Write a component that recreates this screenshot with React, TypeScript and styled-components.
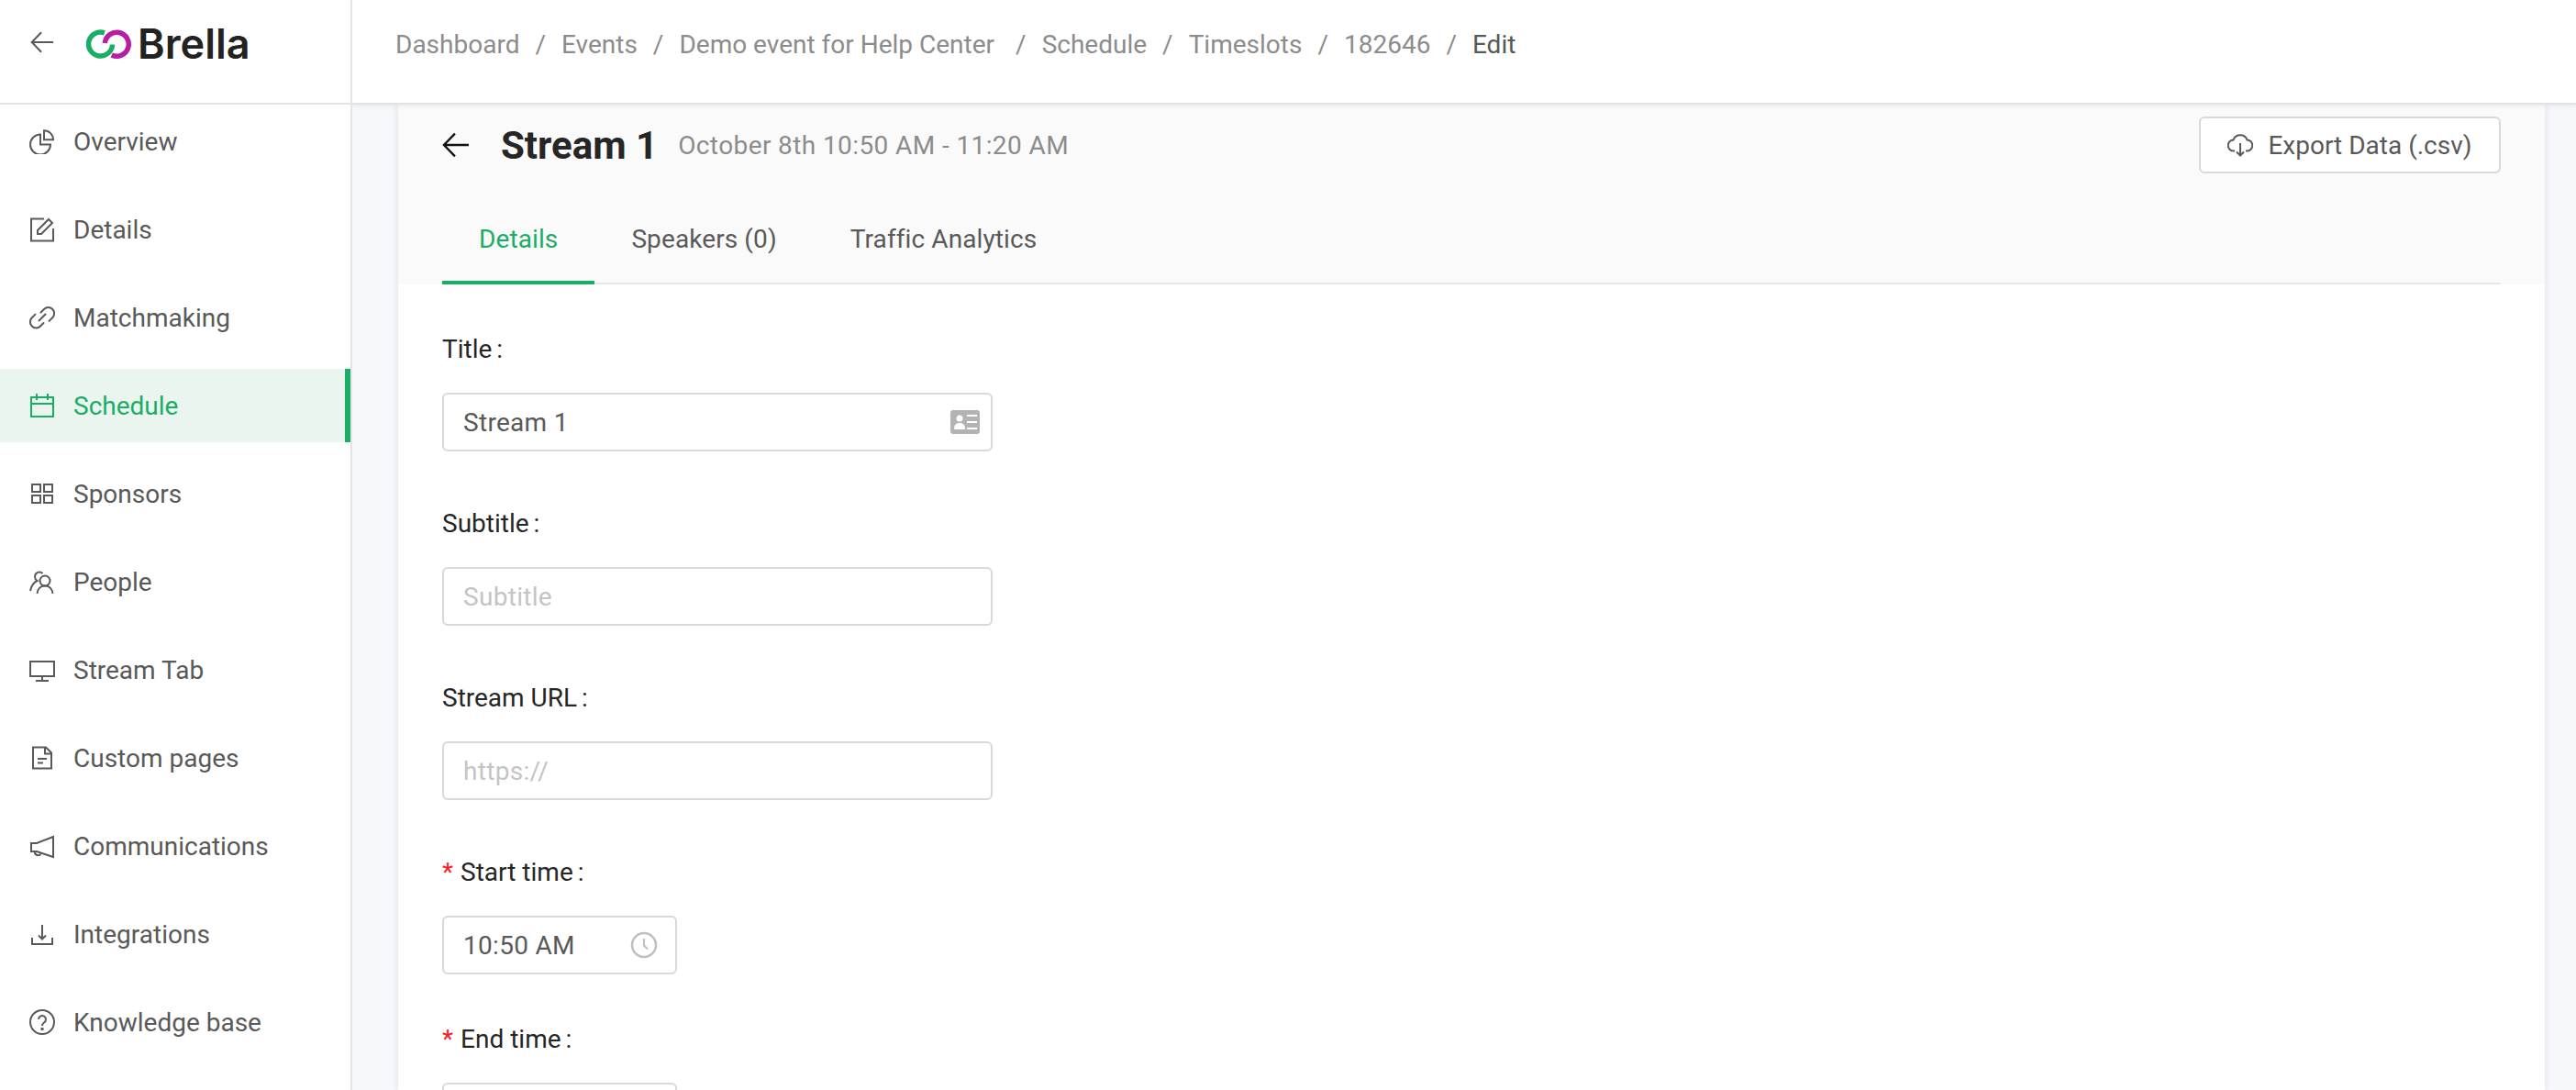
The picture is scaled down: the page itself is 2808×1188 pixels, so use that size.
import React from "react";
import styled, { createGlobalStyle } from "styled-components";

const FONT = `Roboto, "Noto Sans", "Liberation Sans", sans-serif`;

const GlobalStyle = createGlobalStyle`
  html, body {
    margin: 0;
    height: 100%;
    overflow: hidden;
    background: #f7f8fc;
    font-family: ${FONT};
  }
  * { box-sizing: border-box; }
`;

const Page = styled.div`
  display: grid;
  grid-template-columns: 384px 1fr;
  width: 2808px;
  height: 1188px;
  overflow: hidden;
`;

const Sidebar = styled.aside`
  background: #fff;
  border-right: 2px solid #e4e4e6;
  height: 1188px;
  overflow: hidden;
`;

const Brand = styled.div`
  height: 114px;
  border-bottom: 2px solid #e2e2e2;
  display: flex;
  align-items: flex-start;
  padding: 31px 0 0 33px;
`;

const BackLink = styled.span`
  display: flex;
  width: 61px;
  height: 30px;
  margin-top: 2px;
  color: #595959;
`;

const BrandName = styled.span`
  font-family: Inter, sans-serif;
  font-weight: 600;
  font-size: 45px;
  line-height: 34px;
  color: #222;
  margin-left: 7px;
`;

const Nav = styled.nav`
  display: flex;
  flex-direction: column;
  gap: 16px;
`;

const NavItem = styled.a<{ $active?: boolean }>`
  display: flex;
  align-items: center;
  gap: 20px;
  height: 80px;
  padding-left: 32px;
  font-size: 28px;
  color: ${(p) => (p.$active ? "#1aad66" : "#595959")};
  background: ${(p) => (p.$active ? "#ebf5ef" : "transparent")};
  border-right: 6px solid ${(p) => (p.$active ? "#1aad66" : "transparent")};
`;

const Main = styled.main`
  min-width: 0;
  height: 1188px;
  overflow: hidden;
`;

const TopBar = styled.header`
  height: 114px;
  background: #fff;
  border-bottom: 2px solid #e2e2e2;
  box-shadow: 0 2px 6px rgba(0, 0, 0, 0.06);
  display: flex;
  align-items: flex-start;
  padding: 31px 0 0 47px;
  position: relative;
  z-index: 2;
`;

const Crumbs = styled.ol`
  display: flex;
  list-style: none;
  margin: 0;
  padding: 0;
  font-size: 28px;
  line-height: 36px;
  color: #8c8c8c;
`;

const Crumb = styled.li<{ $current?: boolean; $wide?: boolean }>`
  color: ${(p) => (p.$current ? "#595959" : "#8c8c8c")};
  &:not(:last-child)::after {
    content: "/";
    margin: 0 ${(p) => (p.$wide ? "17px 0 23px" : "17px")};
    color: #8c8c8c;
  }
`;

const Content = styled.div`
  padding: 0 34px 0 50px;
`;

const Card = styled.section`
  background: #fff;
  box-shadow: 0 0 8px rgba(40, 50, 90, 0.12);
  height: 1074px;
  overflow: hidden;
`;

const CardHead = styled.div`
  background: #fafafa;
  padding: 13px 48px 0;
  height: 196px;
`;

const TitleRow = styled.div`
  display: flex;
  align-items: center;
  height: 62px;
`;

const BackArrow = styled.span`
  display: flex;
  color: #111;
  margin-right: 34px;
`;

const Heading = styled.h1`
  margin: 0 22px 0 0;
  font-size: 42px;
  font-weight: 700;
  color: #262626;
`;

const When = styled.span`
  font-size: 28px;
  letter-spacing: 0.4px;
  color: #8c8c8c;
`;

const ExportButton = styled.button`
  margin-left: auto;
  width: 329px;
  height: 62px;
  display: flex;
  align-items: center;
  justify-content: center;
  gap: 16px;
  background: #fff;
  border: 2px solid #d9d9d9;
  border-radius: 6px;
  font-family: inherit;
  font-size: 28px;
  color: #595959;
`;

const Tabs = styled.div`
  display: flex;
  margin-top: 32px;
  height: 89px;
  border-bottom: 2px solid #e8e8e8;
`;

const Tab = styled.div<{ $active?: boolean }>`
  display: flex;
  align-items: center;
  height: 89px;
  padding: 0 40px 7px;
  font-size: 28px;
  letter-spacing: 0.1px;
  color: ${(p) => (p.$active ? "#1aad66" : "#595959")};
  border-bottom: 4px solid ${(p) => (p.$active ? "#1aad66" : "transparent")};
`;

const Form = styled.form`
  padding: 51px 48px 0;
`;

const Field = styled.div<{ $gap?: number }>`
  margin-bottom: ${(p) => p.$gap ?? 59}px;
`;

const Label = styled.label`
  display: block;
  height: 40px;
  line-height: 40px;
  margin-bottom: 27px;
  font-size: 28px;
  color: #262626;
  &::after {
    content: ":";
    margin-left: 5px;
  }
`;

const Star = styled.span`
  color: #f5222d;
  margin-right: 8px;
`;

const InputBox = styled.div<{ $narrow?: boolean }>`
  display: flex;
  align-items: center;
  width: ${(p) => (p.$narrow ? 256 : 600)}px;
  height: 64px;
  border: 2px solid #d9d9d9;
  border-radius: 6px;
  background: #fff;
  padding: 0 12px 0 21px;
`;

const Input = styled.input`
  flex: 1;
  min-width: 0;
  border: 0;
  outline: 0;
  padding: 0;
  font-family: inherit;
  font-size: 28px;
  letter-spacing: 0.3px;
  color: #595959;
  background: transparent;
  &::placeholder {
    color: #c4c4c4;
    opacity: 1;
  }
`;

const Glyph = ({ children, size = 28 }: { children: React.ReactNode; size?: number }) => (
  <svg
    width={size}
    height={size}
    viewBox="0 0 28 28"
    fill="none"
    stroke="currentColor"
    strokeWidth="2"
    style={{ flexShrink: 0 }}
  >
    {children}
  </svg>
);

const navItems: { label: string; active?: boolean; icon: React.ReactNode }[] = [
  {
    label: "Overview",
    icon: (
      <>
        <path d="M12 6.5a11 11 0 1 0 11 11H12z" />
        <path d="M16 2.2a10 10 0 0 1 10 10H16z" />
      </>
    ),
  },
  {
    label: "Details",
    icon: (
      <>
        <path d="M16 2.5H2v24h24V13" />
        <path d="M9 19v-4L21 3l4 4-12 12z" />
      </>
    ),
  },
  {
    label: "Matchmaking",
    icon: (
      <>
        <path d="M12.500 8.500l3.500-3.500a6.500 6.500 0 0 1 9.200 9.200l-3.700 3.700" strokeLinecap="round" />
        <path d="M15.500 20l-3.500 3.500a6.500 6.500 0 0 1-9.200-9.200l3.700-3.700" strokeLinecap="round" />
        <path d="M10.500 17.500l7-7" strokeLinecap="round" />
      </>
    ),
  },
  {
    label: "Schedule",
    active: true,
    icon: (
      <>
        <rect x="2" y="5" width="24" height="21" />
        <path d="M2 12h24M8 1v7M20 1v7" />
      </>
    ),
  },
  {
    label: "Sponsors",
    icon: (
      <>
        <rect x="3" y="4" width="9" height="8" />
        <rect x="16" y="4" width="9" height="8" />
        <rect x="3" y="16" width="9" height="8" />
        <rect x="16" y="16" width="9" height="8" />
      </>
    ),
  },
  {
    label: "People",
    icon: (
      <>
        <circle cx="17" cy="13" r="5.500" />
        <path d="M8.500 27c.5-5.500 4-8.500 8.500-8.500s8 3 8.500 8.500" />
        <path d="M14.500 5a5 5 0 0 0-8.500 3.500c0 2 1 3.500 2.500 4.500C5 14.500 2.500 17.500 1 24" />
      </>
    ),
  },
  {
    label: "Stream Tab",
    icon: (
      <>
        <rect x="1" y="5" width="26" height="16" />
        <path d="M14 21v4M7 26h14" />
      </>
    ),
  },
  {
    label: "Custom pages",
    icon: (
      <>
        <path d="M4 2.500h14l6 6v17H4z" />
        <path d="M17 2.500v7h7M9 15h10M9 19.500h6" />
      </>
    ),
  },
  {
    label: "Communications",
    icon: (
      <>
        <path d="M26 4L8 11H2v9h6l18 6z" />
        <path d="M6 20.500a3.500 3.500 0 0 0 6.500 2" />
      </>
    ),
  },
  {
    label: "Integrations",
    icon: (
      <>
        <path d="M3 18v7h22v-7" />
        <path d="M14 4v15M10 15.500l4 4 4-4" />
      </>
    ),
  },
  {
    label: "Knowledge base",
    icon: (
      <>
        <circle cx="14" cy="14" r="13" />
        <path d="M10 11a4 4 0 1 1 6 3.500c-1.500 1-2 1.500-2 3.500" />
        <circle cx="14" cy="21.500" r="0.8" />
      </>
    ),
  },
];

const crumbs = ["Dashboard", "Events", "Demo event for Help Center", "Schedule", "Timeslots", "182646", "Edit"];

const ArrowLeft = ({ size }: { size: number }) => (
  <svg width={size} height={size} viewBox="0 0 28 28" fill="none" stroke="currentColor" strokeWidth="2.200">
    <path d="M27 14H2M13 2.500L1.800 14 13 25.500" />
  </svg>
);

const Logo = () => (
  <svg width="49" height="34" viewBox="0 0 49 34" fill="none" strokeWidth="5.500">
    <path d="M19.900 4.800A13 13 0 1 0 28.500 17.500" stroke="#1aad66" />
    <path d="M20.300 16A13 13 0 1 1 27.700 29" stroke="#b71ea4" />
  </svg>
);

export default function App() {
  return (
    <>
      <GlobalStyle />
      <Page>
        <Sidebar>
          <Brand>
            <BackLink>
              <ArrowLeft size={26} />
            </BackLink>
            <Logo />
            <BrandName>Brella</BrandName>
          </Brand>
          <Nav>
            {navItems.map((item) => (
              <NavItem key={item.label} $active={item.active}>
                <Glyph>{item.icon}</Glyph>
                {item.label}
              </NavItem>
            ))}
          </Nav>
        </Sidebar>
        <Main>
          <TopBar>
            <Crumbs>
              {crumbs.map((c, i) => (
                <Crumb key={c} $current={i === crumbs.length - 1} $wide={i === 2}>
                  {c}
                </Crumb>
              ))}
            </Crumbs>
          </TopBar>
          <Content>
            <Card>
              <CardHead>
                <TitleRow>
                  <BackArrow>
                    <ArrowLeft size={30} />
                  </BackArrow>
                  <Heading>Stream 1</Heading>
                  <When>October 8th 10:50 AM - 11:20 AM</When>
                  <ExportButton type="button">
                    <Glyph>
                      <path d="M8 20.500H7a6 6 0 0 1-.5-12A8 8 0 0 1 21.500 8.500a6 6 0 0 1-.5 12h-1" />
                      <path d="M14 12v13M10 21.500l4 4 4-4" />
                    </Glyph>
                    Export Data (.csv)
                  </ExportButton>
                </TitleRow>
                <Tabs>
                  <Tab $active>Details</Tab>
                  <Tab>Speakers (0)</Tab>
                  <Tab>Traffic Analytics</Tab>
                </Tabs>
              </CardHead>
              <Form>
                <Field>
                  <Label>Title</Label>
                  <InputBox>
                    <Input readOnly value="Stream 1" />
                    <svg width="32" height="26" viewBox="0 0 32 26" style={{ flexShrink: 0 }}>
                      <rect width="32" height="26" rx="3" fill="#b3b3b3" />
                      <circle cx="10" cy="9" r="3.500" fill="#fff" />
                      <path d="M4 21c0-5 2-7 6-7s6 2 6 7z" fill="#fff" />
                      <path d="M18 6h11M18 13h11M18 20h11" stroke="#fff" strokeWidth="2" />
                    </svg>
                  </InputBox>
                </Field>
                <Field>
                  <Label>Subtitle</Label>
                  <InputBox>
                    <Input readOnly placeholder="Subtitle" />
                  </InputBox>
                </Field>
                <Field>
                  <Label>Stream URL</Label>
                  <InputBox>
                    <Input readOnly placeholder="https://" />
                  </InputBox>
                </Field>
                <Field $gap={51}>
                  <Label>
                    <Star>*</Star>Start time
                  </Label>
                  <InputBox $narrow>
                    <Input readOnly value="10:50 AM" />
                    <svg width="30" height="30" viewBox="0 0 30 30" fill="none" stroke="#bfbfbf" strokeWidth="2.500" style={{ flexShrink: 0, marginRight: 7 }}>
                      <circle cx="15" cy="15" r="13" />
                      <path d="M15 8v7.500l4 4" strokeWidth="2" />
                    </svg>
                  </InputBox>
                </Field>
                <Field>
                  <Label>
                    <Star>*</Star>End time
                  </Label>
                  <InputBox $narrow />
                </Field>
              </Form>
            </Card>
          </Content>
        </Main>
      </Page>
    </>
  );
}
